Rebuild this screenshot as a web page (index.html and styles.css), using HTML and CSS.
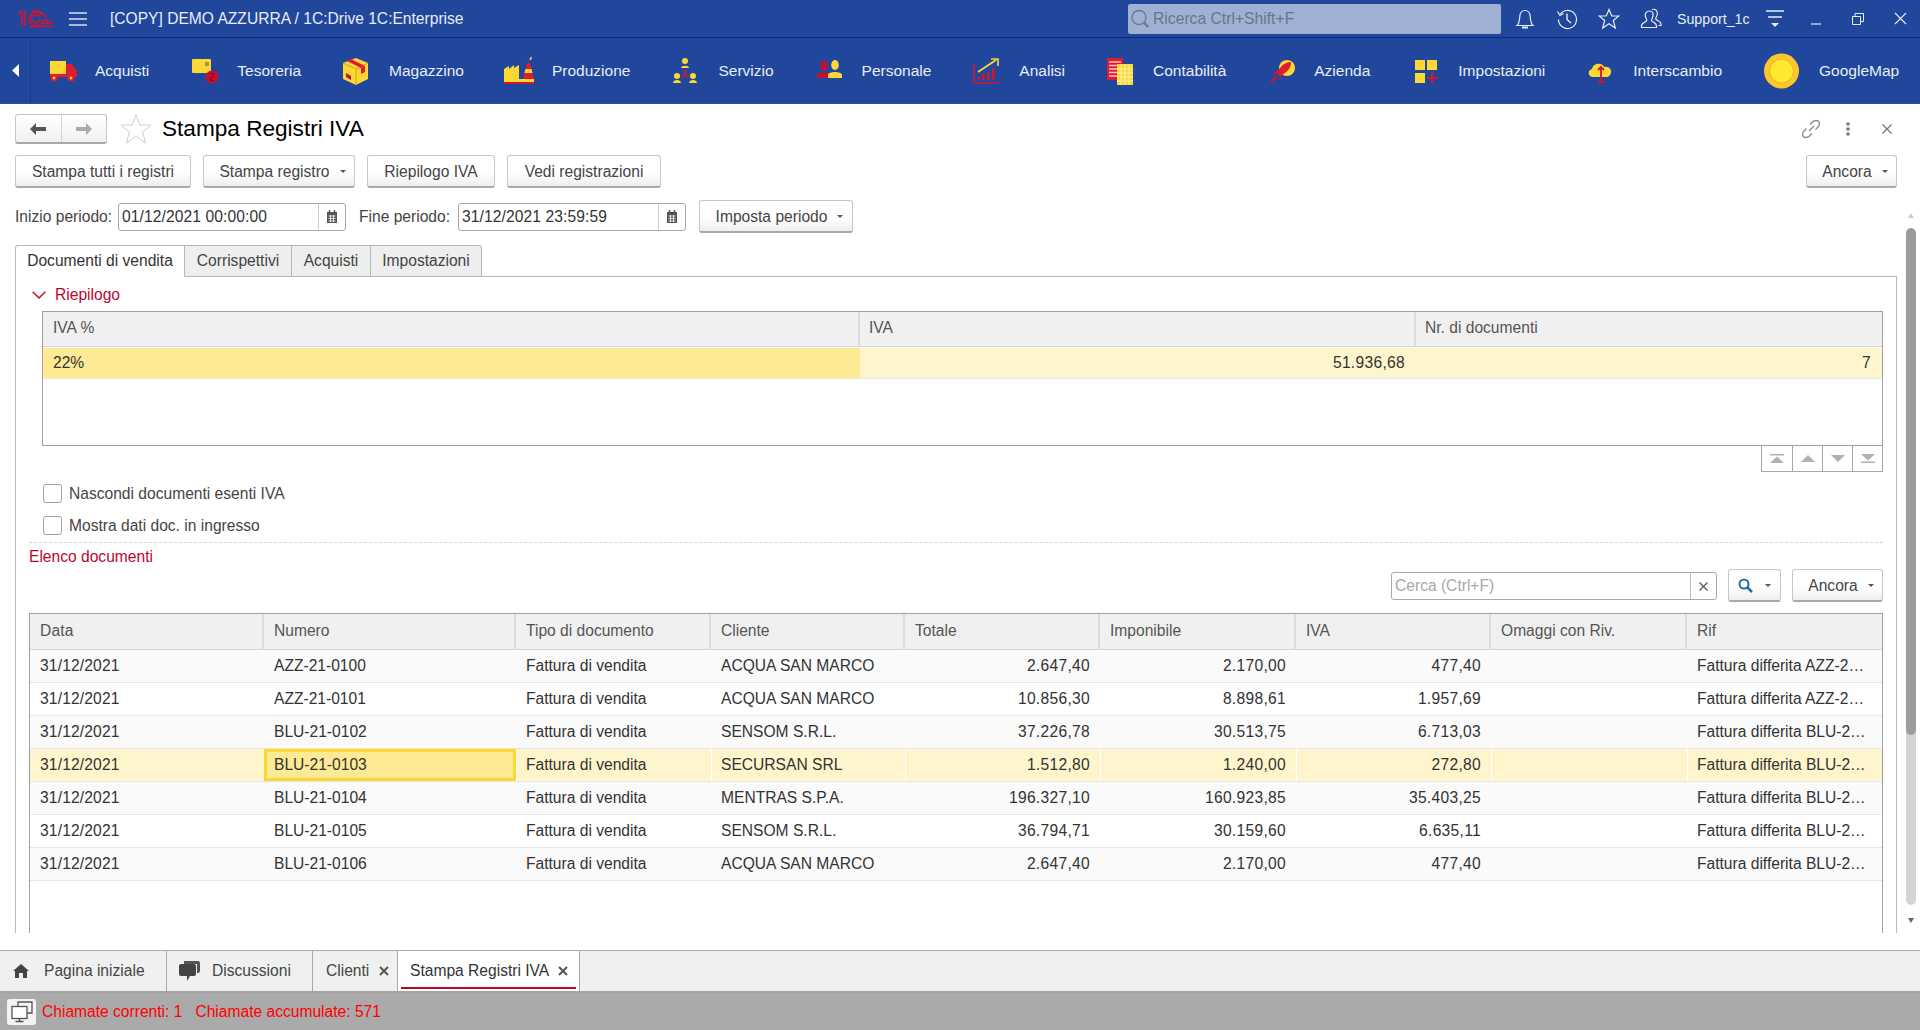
FILE: index.html
```html
<!DOCTYPE html>
<html lang="it">
<head>
<meta charset="utf-8">
<title>Stampa Registri IVA</title>
<link rel="stylesheet" href="styles.css">
</head>
<body>
<header class="topbar">
  <svg class="logo" viewBox="0 0 38 20" width="38" height="20"><g fill="none" stroke="#d8142c" stroke-width="1.6"><path d="M2 5 L6 2 V17"/><path d="M9 2 V17"/><path d="M26 6 A7 7 0 1 0 26 14 H37"/><path d="M23 8 A4 4 0 1 0 23 11.5 H34"/><path d="M13 17.5 H37"/><path d="M30 9.5 A13 9 0 0 0 16 1.5"/></g></svg>
  <svg class="burger" viewBox="0 0 18 14" width="18" height="14"><path d="M0 1H18M0 7H18M0 13H18" stroke="#d9deea" stroke-width="1.4"/></svg>
  <div class="app-title">[COPY] DEMO AZZURRA / 1C:Drive 1C:Enterprise</div>
  <div class="global-search">
    <svg viewBox="0 0 20 22" width="20" height="22"><circle cx="9" cy="9.5" r="7" fill="none" stroke="#6d7890" stroke-width="1.4"/><path d="M14 14.5L18 19" stroke="#6d7890" stroke-width="2.4"/></svg>
    <span>Ricerca Ctrl+Shift+F</span>
  </div>
  <div class="top-tools">
    <svg class="ti-bell" viewBox="0 0 20 22" width="20" height="22"><path d="M2 17.5C4.500 15 4.500 12 4.800 8.500 5 4.500 7 2.500 10 2.500S15 4.500 15.200 8.500C15.500 12 15.500 15 18 17.500Z" fill="none" stroke="#e8ecf5" stroke-width="1.2"/><path d="M7 19.500H13" stroke="#e8ecf5" stroke-width="2"/></svg>
    <svg class="ti-hist" viewBox="0 0 22 22" width="22" height="22"><path d="M4 6.500A9 9 0 1 1 2.500 11.500" fill="none" stroke="#e8ecf5" stroke-width="1.2"/><path d="M1.500 3.500L4 7.500 7.500 5.500" fill="none" stroke="#e8ecf5" stroke-width="1.200"/><path d="M11 5.500V11.500L15 15" fill="none" stroke="#e8ecf5" stroke-width="1.400"/></svg>
    <svg class="ti-star" viewBox="0 0 22 22" width="22" height="22"><path d="M11 1.500L13.800 8H20.800L15.300 12.500 17.300 20 11 15.800 4.700 20 6.700 12.500 1.200 8H8.200Z" fill="none" stroke="#e8ecf5" stroke-width="1.200"/></svg>
    <svg class="ti-user" viewBox="0 0 22 22" width="22" height="22"><path d="M9.500 3C12.500 3 13.500 5.500 13 8 12.700 10 11.500 11 11.500 12.500 11.500 14 16.500 14.500 16.500 18V19.500H1.500V18C1.500 14.500 6.800 14 6.800 12.500 6.800 11 5.800 10 5.300 8 4.800 5.500 6.500 3 9.500 3Z" fill="none" stroke="#e8ecf5" stroke-width="1.200"/><path d="M12 1.500C15.500 .5 18 3 17.200 6.500 16.900 8.500 15.500 9.500 15.800 11 16.200 12.500 21 13 21 16V17.500H18.500" fill="none" stroke="#e8ecf5" stroke-width="1.200"/></svg>
    <span class="user-name">Support_1c</span>
    <svg class="ti-menu" viewBox="0 0 18 20" width="18" height="20"><path d="M0 2H18M2 8H16" stroke="#e8ecf5" stroke-width="1.400"/><path d="M5 14H13L9 18Z" fill="#e8ecf5"/></svg>
    <svg class="ti-min" viewBox="0 0 12 14" width="12" height="14"><path d="M1 12H11" stroke="#e8ecf5" stroke-width="1.200"/></svg>
    <svg class="ti-rest" viewBox="0 0 12 12" width="12" height="12"><path d="M.5 3.500H8.500V11.500H.5ZM3 3.500V.5H11.500V8.500H8.500" fill="none" stroke="#e8ecf5"/></svg>
    <svg class="ti-close" viewBox="0 0 13 13" width="13" height="13"><path d="M1 1L12 12M12 1L1 12" stroke="#e8ecf5" stroke-width="1.100"/></svg>
  </div>
</header>

<nav class="sections">
  <div class="collapse"><svg viewBox="0 0 7 13" width="7" height="13"><path d="M7 0V13L0 6.500Z" fill="#fff"/></svg></div>
  <div class="sec"><svg class="sec-i" viewBox="0 0 30 30"><rect x="3" y="5" width="16" height="13" fill="#fdd835"/><path d="M19 8H25L30 15V20H19Z" fill="#e01b2f"/><path d="M3 18H30V21H3Z" fill="#e01b2f"/><circle cx="7" cy="22" r="3.500" fill="#e01b2f"/><circle cx="24" cy="22" r="3.500" fill="#e01b2f"/><circle cx="7" cy="22" r="1.400" fill="#fdd835"/><circle cx="24" cy="22" r="1.400" fill="#fdd835"/></svg><span>Acquisti</span></div>
  <div class="sec"><svg class="sec-i" viewBox="0 0 30 30"><rect x="3" y="3" width="19" height="14" rx="1" fill="#fdd835"/><rect x="16" y="6" width="4" height="4" fill="#a39a3a"/><circle cx="23" cy="21" r="6.500" fill="#c4102c"/><path d="M21 17.500H25L21 24.500H25" stroke="#8e0b22" stroke-width="1.200" fill="none"/></svg><span>Tesoreria</span></div>
  <div class="sec"><svg class="sec-i" viewBox="0 0 30 30"><path d="M15 2L27 7V23L15 29 2 23V7Z" fill="#fdd835"/><path d="M2 7L15 13 27 7M15 13V29" fill="none" stroke="#c9a227" stroke-width="1"/><path d="M6 5L10 3 24 10 20 12Z" fill="#e01b2f"/><path d="M20 12V18L24 16V10Z" fill="#e01b2f"/><path d="M5 17L10 20V24L5 21Z" fill="#c4102c"/></svg><span>Magazzino</span></div>
  <div class="sec"><svg class="sec-i" viewBox="0 0 30 30"><path d="M0 23V13L5 10V13L10 9V12L15 9V23Z" fill="#fdd835"/><path d="M19 23L23 7H26L30 23Z" fill="#e01b2f"/><path d="M21.500 13H27.500L28.500 17H20.500Z" fill="#fdd835"/><path d="M26 4L27.500 1" stroke="#fdd835" stroke-width="1.500"/><path d="M0 23H30V27H0Z" fill="#fdd835"/><path d="M0 26H30V28H0Z" fill="#d8142c"/></svg><span>Produzione</span></div>
  <div class="sec"><svg class="sec-i" viewBox="0 0 30 30"><g fill="#fdd835"><circle cx="15" cy="5" r="3"/><path d="M11 12C11 9 19 9 19 12Z"/><circle cx="7" cy="20" r="3"/><path d="M3 27C3 23 11 23 11 27Z"/><circle cx="23" cy="20" r="3"/><path d="M19 27C19 23 27 23 27 27Z"/></g><path d="M15 14V18L11 22M15 18L19 22" fill="none" stroke="#d8142c" stroke-width="1.500"/></svg><span>Servizio</span></div>
  <div class="sec"><svg class="sec-i" viewBox="0 0 30 30"><ellipse cx="10" cy="9.500" rx="3.500" ry="5" fill="#c4102c"/><path d="M3 22V19C3 15.500 14 15.500 15 18V22Z" fill="#c4102c"/><ellipse cx="21" cy="9" rx="3.800" ry="5" fill="#fdd835"/><path d="M14 22V19C14 15 28 15 28 19V22Z" fill="#fdd835"/></svg><span>Personale</span></div>
  <div class="sec"><svg class="sec-i" viewBox="0 0 30 30"><path d="M3 8V27H28" fill="none" stroke="#d8142c" stroke-width="1.600"/><path d="M7 24h2v-3h-2zM11 24h2.500v-6h-2.500zM16 24h2.500v-8h-2.500zM21 24h2.500v-12h-2.500z" fill="#d8142c"/><path d="M7 16L25 4" stroke="#fdd835" stroke-width="1.800"/><path d="M20 3H27V10" fill="none" stroke="#fdd835" stroke-width="1.600"/></svg><span>Analisi</span></div>
  <div class="sec"><svg class="sec-i" viewBox="0 0 30 30"><rect x="2" y="2" width="16" height="22" fill="#e01b2f"/><path d="M4 6H16M4 9.500H16M4 13H16M4 16.500H13M4 20H13" stroke="#f6c2c8" stroke-width="1.300"/><rect x="12" y="8" width="16" height="21" fill="#fdd835"/><path d="M16 8V29M20 8V29M24 8V29M12 13H28M12 17H28M12 21H28M12 25H28" stroke="#fff2a8" stroke-width="1"/></svg><span>Contabilità</span></div>
  <div class="sec"><svg class="sec-i" viewBox="0 0 30 30"><circle cx="21" cy="12" r="8" fill="#fdd835"/><path d="M25 6C18 6 14 11 11 17L14 20C20 17 25 13 25 6Z" fill="#e01b2f"/><path d="M8 16L14 14 10 20ZM12 24L16 18 14 24Z" fill="#d8142c"/><path d="M5 26L10 21" stroke="#d8142c" stroke-width="2"/></svg><span>Azienda</span></div>
  <div class="sec"><svg class="sec-i" viewBox="0 0 30 30"><g fill="#fdd835"><rect x="5" y="4" width="10" height="10"/><rect x="17" y="4" width="10" height="10"/><rect x="5" y="17" width="10" height="10"/></g><path d="M22 16V28M17 22H28" stroke="#d8142c" stroke-width="2"/></svg><span>Impostazioni</span></div>
  <div class="sec"><svg class="sec-i" viewBox="0 0 30 30"><path d="M8 21C3 21 2 14 7 13 8 7 17 6 19 11 25 10 28 15 25 19 24 20.500 23 21 21 21Z" fill="#fdd835"/><path d="M16 11V26M13 14L16 11 19 14M13 26H19" fill="none" stroke="#d8142c" stroke-width="1.800"/></svg><span>Interscambio</span></div>
  <div class="sec sec-map"><svg class="sec-i-map" viewBox="0 0 39 36"><circle cx="19.500" cy="18" r="17.500" fill="#fdc62a"/><circle cx="19.500" cy="18" r="12" fill="#ffe92e" stroke="#e9b528"/></svg><span>GoogleMap</span></div>
</nav>

<main class="form">
  <div class="content">
    <div class="form-head">
      <div class="nav-btns">
        <div class="nb"><svg viewBox="0 0 16 12" width="16" height="12"><path d="M0 6L6 0V4H16V8H6V12Z" fill="#555"/></svg></div>
        <div class="nb"><svg viewBox="0 0 16 12" width="16" height="12"><path d="M16 6L10 0V4H0V8H10V12Z" fill="#aaa"/></svg></div>
      </div>
      <svg class="fav" viewBox="0 0 32 30" width="32" height="30"><path d="M16 1L20 11H31L22.500 18 25.500 29 16 22.500 6.500 29 9.500 18 1 11H12Z" fill="#fff" stroke="#c9cdd3"/></svg>
      <h1>Stampa Registri IVA</h1>
      <div class="head-tools">
        <svg viewBox="0 0 20 20" width="20" height="20"><path d="M8 12L13 7M9 5.500L11.500 3C13.500 1 17 1 18 3S18.500 6.500 17 8L14.500 10.500M11 14.500L8.500 17C6.500 19 3 19 2 17S1.500 13.500 3 12L5.500 9.500" fill="none" stroke="#888" stroke-width="1.300"/></svg>
        <svg class="ht-dots" viewBox="0 0 6 14" width="6" height="14"><g fill="#777"><circle cx="3" cy="2" r="1.800"/><circle cx="3" cy="7" r="1.800"/><circle cx="3" cy="12" r="1.800"/></g></svg>
        <svg class="ht-x" viewBox="0 0 10 10" width="10" height="10"><path d="M.5 .5L9.500 9.500M9.500 .5L.5 9.500" stroke="#777" stroke-width="1.300"/></svg>
      </div>
    </div>

    <div class="cmd-row">
      <button class="btn b-all">Stampa tutti i registri</button>
      <button class="btn b-reg">Stampa registro<i class="caret"></i></button>
      <button class="btn b-riep">Riepilogo IVA</button>
      <button class="btn b-vedi">Vedi registrazioni</button>
      <button class="btn b-more">Ancora<i class="caret"></i></button>
    </div>

    <div class="period-row">
      <label class="lbl">Inizio periodo:</label>
      <div class="date-f"><span>01/12/2021 00:00:00</span><b class="cal"><svg viewBox="0 0 12 14" width="12" height="14"><path d="M1 2H11V13H1Z" fill="#555"/><path d="M3.500 0V3M8.500 0V3" stroke="#555" stroke-width="1.500"/><path d="M2.500 6H9.500M2.500 8.500H9.500M2.500 11H9.500M4.500 5V12M7.500 5V12" stroke="#fff" stroke-width=".8"/></svg></b></div>
      <label class="lbl lbl2">Fine periodo:</label>
      <div class="date-f"><span>31/12/2021 23:59:59</span><b class="cal"><svg viewBox="0 0 12 14" width="12" height="14"><path d="M1 2H11V13H1Z" fill="#555"/><path d="M3.500 0V3M8.500 0V3" stroke="#555" stroke-width="1.500"/><path d="M2.500 6H9.500M2.500 8.500H9.500M2.500 11H9.500M4.500 5V12M7.500 5V12" stroke="#fff" stroke-width=".8"/></svg></b></div>
      <button class="btn b-per">Imposta periodo<i class="caret"></i></button>
    </div>

    <div class="tabs">
      <div class="tab tab-on t1">Documenti di vendita</div>
      <div class="tab t2">Corrispettivi</div>
      <div class="tab t3">Acquisti</div>
      <div class="tab t4">Impostazioni</div>
    </div>

    <section class="pane">
      <div class="group-title"><svg viewBox="0 0 14 8" width="14" height="8"><path d="M.7 .7L7 7 13.300 .7" fill="none" stroke="#c4102c" stroke-width="1.500"/></svg><span>Riepilogo</span></div>
      <div class="sum">
        <div class="sum-row sum-head"><div class="hc">IVA %</div><div class="hc">IVA</div><div class="hc">Nr. di documenti</div></div>
        <div class="sum-row sum-sel"><div class="cur-s">22%</div><div class="num">51.936,68</div><div class="num">7</div></div>
      </div>
      <div class="pager">
        <div class="pg"><svg viewBox="0 0 14 9" width="14" height="9"><path d="M0 0H14V1.500H0ZM7 2.500L14 9H0Z" fill="#b0b0b0"/></svg></div>
        <div class="pg"><svg viewBox="0 0 14 7" width="14" height="7"><path d="M7 0L14 7H0Z" fill="#b0b0b0"/></svg></div>
        <div class="pg"><svg viewBox="0 0 14 7" width="14" height="7"><path d="M7 7L14 0H0Z" fill="#b0b0b0"/></svg></div>
        <div class="pg"><svg viewBox="0 0 14 9" width="14" height="9"><path d="M0 7.500H14V9H0ZM7 6.500L14 0H0Z" fill="#b0b0b0"/></svg></div>
      </div>
      <div class="check c1"><i></i><span>Nascondi documenti esenti IVA</span></div>
      <div class="check c2"><i></i><span>Mostra dati doc. in ingresso</span></div>
      <div class="dash"></div>
      <div class="list-title">Elenco documenti</div>
      <div class="list-tools">
        <div class="search"><span>Cerca (Ctrl+F)</span><b><svg viewBox="0 0 9 9" width="9" height="9"><path d="M.5 .5L8.500 8.500M8.500 .5L.5 8.500" stroke="#555" stroke-width="1.200"/></svg></b></div>
        <button class="btn b-find"><svg viewBox="0 0 15 15" width="15" height="15"><circle cx="6" cy="6" r="4.500" fill="none" stroke="#1f6fa8" stroke-width="2"/><path d="M9.500 9.500L14 14" stroke="#1f6fa8" stroke-width="2.500"/></svg><i class="caret"></i></button>
        <button class="btn b-more2">Ancora<i class="caret"></i></button>
      </div>
      <div class="docs">
        <div class="doc-row doc-head"><div class="hc">Data</div><div class="hc">Numero</div><div class="hc">Tipo di documento</div><div class="hc">Cliente</div><div class="hc">Totale</div><div class="hc">Imponibile</div><div class="hc">IVA</div><div class="hc">Omaggi con Riv.</div><div class="hc">Rif</div></div>
        <div class="doc-row alt"><div>31/12/2021</div><div>AZZ-21-0100</div><div>Fattura di vendita</div><div>ACQUA SAN MARCO</div><div class="num">2.647,40</div><div class="num">2.170,00</div><div class="num">477,40</div><div></div><div>Fattura differita AZZ-2…</div></div>
        <div class="doc-row"><div>31/12/2021</div><div>AZZ-21-0101</div><div>Fattura di vendita</div><div>ACQUA SAN MARCO</div><div class="num">10.856,30</div><div class="num">8.898,61</div><div class="num">1.957,69</div><div></div><div>Fattura differita AZZ-2…</div></div>
        <div class="doc-row alt"><div>31/12/2021</div><div>BLU-21-0102</div><div>Fattura di vendita</div><div>SENSOM S.R.L.</div><div class="num">37.226,78</div><div class="num">30.513,75</div><div class="num">6.713,03</div><div></div><div>Fattura differita BLU-2…</div></div>
        <div class="doc-row sel"><div>31/12/2021</div><div class="cur">BLU-21-0103</div><div>Fattura di vendita</div><div>SECURSAN SRL</div><div class="num">1.512,80</div><div class="num">1.240,00</div><div class="num">272,80</div><div></div><div>Fattura differita BLU-2…</div></div>
        <div class="doc-row alt"><div>31/12/2021</div><div>BLU-21-0104</div><div>Fattura di vendita</div><div>MENTRAS S.P.A.</div><div class="num">196.327,10</div><div class="num">160.923,85</div><div class="num">35.403,25</div><div></div><div>Fattura differita BLU-2…</div></div>
        <div class="doc-row"><div>31/12/2021</div><div>BLU-21-0105</div><div>Fattura di vendita</div><div>SENSOM S.R.L.</div><div class="num">36.794,71</div><div class="num">30.159,60</div><div class="num">6.635,11</div><div></div><div>Fattura differita BLU-2…</div></div>
        <div class="doc-row alt"><div>31/12/2021</div><div>BLU-21-0106</div><div>Fattura di vendita</div><div>ACQUA SAN MARCO</div><div class="num">2.647,40</div><div class="num">2.170,00</div><div class="num">477,40</div><div></div><div>Fattura differita BLU-2…</div></div>
      </div>
    </section>
  </div>
  <aside class="vscroll">
    <svg class="arr" viewBox="0 0 6 5" width="6" height="5"><path d="M3 0L6 5H0Z" fill="#ccc"/></svg>
    <div class="track"><div class="thumb"></div></div>
    <svg class="arr arr-d" viewBox="0 0 6 5" width="6" height="5"><path d="M3 5L6 0H0Z" fill="#666"/></svg>
  </aside>
</main>

<div class="open-tabs">
  <div class="ot ot1"><svg viewBox="0 0 16 14" width="16" height="14"><path d="M8 0L16 7H14V14H10V9H6V14H2V7H0Z" fill="#444"/></svg><span>Pagina iniziale</span></div>
  <div class="ot ot2"><svg viewBox="0 0 21 20" width="21" height="20"><path d="M5 0H19Q21 0 21 2V10Q21 12 19 12H18V3H5Z" fill="#555"/><path d="M2 3H15Q17 3 17 5V13Q17 15 15 15H11L8 20V15H2Q0 15 0 13V5Q0 3 2 3Z" fill="#444"/></svg><span>Discussioni</span></div>
  <div class="ot ot3"><span>Clienti</span><svg viewBox="0 0 10 10" width="10" height="10"><path d="M1 1L9 9M9 1L1 9" stroke="#555" stroke-width="2"/></svg></div>
  <div class="ot ot4"><span>Stampa Registri IVA</span><svg viewBox="0 0 10 10" width="10" height="10"><path d="M1 1L9 9M9 1L1 9" stroke="#555" stroke-width="2"/></svg></div>
</div>

<footer class="status">
  <div class="st-ico"><svg viewBox="0 0 24 24" width="24" height="24"><path d="M8 6V2H22V13H17" fill="none" stroke="#555" stroke-width="1.300"/><rect x="2" y="6.500" width="15" height="12" fill="#fff" stroke="#555" stroke-width="1.300"/><path d="M9.500 18.500V21M5.500 21.500H13.500" stroke="#555" stroke-width="1.500"/></svg></div>
  <span class="st-a">Chiamate correnti: 1</span>
  <span class="st-b">Chiamate accumulate: 571</span>
</footer>
</body>
</html>
```
FILE: styles.css
```css
* { box-sizing: border-box; }
html, body { margin: 0; height: 100%; }
body {
  width: 1920px; height: 1030px; overflow: hidden;
  display: flex; flex-direction: column;
  font-family: "Liberation Sans", Arial, sans-serif;
  font-size: 15.6px; color: #333; background: #fff;
}
svg { display: block; flex: none; }

/* top bar */
.topbar {
  height: 38px; flex: none; background: #20479c;
  border-bottom: 1px solid #0c2a7d;
  display: flex; align-items: center; color: #e8ecf5;
}
.logo { margin-left: 16px; }
.burger { margin-left: 15px; }
.app-title { margin-left: 23px; font-size: 15.6px; width: 1018px; white-space: nowrap; }
.global-search {
  width: 373px; height: 30px; background: #a0b0d4; border-radius: 2px;
  display: flex; align-items: center; padding-left: 2px; color: #6a7488; font-size: 15.7px;
}
.global-search span { margin-left: 3px; }
.top-tools { display: flex; align-items: center; flex: 1; position: relative; height: 30px; }
.ti-bell { margin-left: 14px; }
.ti-hist { margin-left: 21px; }
.ti-star { margin-left: 20px; }
.ti-user { margin-left: 20px; }
.user-name { margin-left: 15px; font-size: 14.2px; width: 73px; white-space: nowrap; }
.ti-menu { margin-left: 16px; }
.ti-min { margin-left: 26px; }
.ti-rest { margin-left: 30px; }
.ti-close { margin-left: 30px; }

/* section panel */
.sections {
  height: 66px; flex: none; background: #20479c;
  display: flex; align-items: center; color: #e8ecf5;
  border-bottom: 1px solid #2a4f9e;
}
.collapse {
  width: 31px; height: 66px; display: flex; align-items: center;
  padding-left: 12px; border-right: 1px solid #173a8c;
}
.sec { display: flex; align-items: center; gap: 18px; margin-left: 40px; white-space: nowrap; font-size: 15.5px; }
.collapse + .sec { margin-left: 16px; }
.sec-i { width: 30px; height: 30px; }
.sec-i-map { width: 39px; height: 36px; }
.sec-map { margin-left: 40px; }

/* form */
.form { height: 846px; flex: none; display: flex; }
.content { width: 1897px; padding: 10px 0 17px 15px; display: flex; flex-direction: column; }

.form-head { height: 30px; display: flex; align-items: center; flex: none; }
.nav-btns {
  width: 92px; height: 30px; display: flex; border: 1px solid #c6c6c6; border-bottom: 2px solid #a8a8a8;
  border-radius: 3px; background: linear-gradient(#fff, #f0f0f0);
}
.nb { flex: 1; display: flex; align-items: center; justify-content: center; }
.nb + .nb { border-left: 1px solid #d4d4d4; }
.fav { margin-left: 13px; }
h1 { margin: 0 0 0 10px; font-size: 22.6px; font-weight: 400; color: #000; flex: 1; }
.head-tools { display: flex; align-items: center; width: 96px; }
.ht-dots { margin-left: 24px; }
.ht-x { margin-left: 31px; }

.cmd-row, .list-tools { display: flex; }
.btn {
  height: 33px; border: 1px solid #c6c6c6; border-bottom: 2px solid #a8a8a8; border-radius: 3px;
  background: linear-gradient(#fff 55%, #eee);
  font: inherit; color: #444; padding: 1px 0 0; display: flex; align-items: center; justify-content: center; flex: none;
}
.caret { width: 0; height: 0; margin-left: 10px; border: 3px solid transparent; border-top-color: #555; border-bottom: 0; }
.b-reg, .b-more, .b-per, .b-more2 { padding-left: 7px; }
.cmd-row { margin-top: 11px; gap: 12px; flex: none; }
.b-all { width: 176px; }
.b-reg { width: 152px; }
.b-riep { width: 128px; }
.b-vedi { width: 154px; }
.b-more { width: 91px; margin-left: auto; }

.period-row { margin-top: 12px; height: 33px; display: flex; align-items: center; flex: none; color: #444; }
.lbl { width: 103px; white-space: nowrap; padding-top: 1px; }
.lbl2 { width: 99px; margin-left: 13px; }
.date-f {
  width: 228px; height: 28px; border: 1px solid #a9a9a9; border-radius: 3px;
  display: flex; align-items: center; color: #333;
}
.date-f span { flex: 1; padding: 1px 0 0 3px; letter-spacing: .1px; }
.cal { width: 27px; height: 100%; border-left: 1px solid #ccc; display: flex; align-items: center; justify-content: center; }
.b-per { width: 154px; margin-left: 13px; }

.tabs { margin-top: 12px; height: 32px; display: flex; flex: none; position: relative; z-index: 1; }
.tab {
  height: 32px; border: 1px solid #b8b8b8; border-left: 0; background: #eee;
  display: flex; align-items: center; justify-content: center; color: #444; white-space: nowrap;
}
.tab-on { background: #fff; border-left: 1px solid #b8b8b8; border-bottom-color: #fff; border-radius: 3px 0 0 0; color: #333; }
.t1 { width: 170px; }
.t2 { width: 107px; }
.t3 { width: 79px; }
.t4 { width: 111px; border-radius: 0 3px 0 0; }

.pane {
  flex: 1; min-height: 0; margin-top: -1px;
  border: 1px solid #b8b8b8; border-bottom: 0;
  padding: 0 13px 0 13px; display: flex; flex-direction: column;
}
.group-title { height: 34px; display: flex; align-items: center; color: #b9062f; padding: 2px 0 0 3px; flex: none; }
.group-title span { margin-left: 9px; }
.sum { height: 135px; margin-left: 13px; border: 1px solid #a0a0a0; flex: none; }
.sum-row { display: grid; grid-template-columns: 817px 556px 1fr; }
.sum-head { height: 35px; }
.sum-head .hc + .hc { padding-left: 9px; }
.hc {
  background: #f0f0f0; color: #555; display: flex; align-items: center; padding: 0 0 2px 10px;
  border-right: 2px solid #dcdcdc; border-bottom: 1px solid #d4d4d4; white-space: nowrap; height: 100%;
}
.hc:last-child { border-right: 0; }
.sum-sel { height: 31px; margin-top: 1px; background: #fff5cc; border-bottom: 1px solid #e6e6e6; }
.cur-s { background: #fee994; display: flex; align-items: center; padding-left: 10px; }
.num { display: flex; align-items: center; justify-content: flex-end; padding-right: 11px; letter-spacing: .3px; }

.pager { display: flex; align-self: flex-end; height: 26px; flex: none; border: 1px solid #a8a8a8; border-top: 0; }
.pg { width: 30px; display: flex; align-items: center; justify-content: center; }
.pg + .pg { border-left: 1px solid #a8a8a8; }

.check { display: flex; align-items: center; margin-left: 14px; height: 19px; color: #444; flex: none; }
.check i { width: 19px; height: 19px; border: 1px solid #a0a0a0; border-radius: 3px; background: #fff; }
.check span { margin-left: 7px; }
.c1 { margin-top: 12px; }
.c2 { margin-top: 13px; }
.dash { margin-top: 7px; height: 0; border-top: 1px dashed #d6d6d6; flex: none; }
.list-title { margin-top: 6px; height: 16px; line-height: 16px; color: #b9062f; flex: none; }
.list-tools { margin-top: 4px; height: 33px; justify-content: flex-end; align-items: flex-start; flex: none; }
.search {
  width: 326px; height: 28px; margin-top: 3px; border: 1px solid #a9a9a9; border-radius: 3px;
  display: flex; align-items: center; color: #a8a8a8;
}
.search span { flex: 1; padding-left: 3px; }
.search b { width: 26px; height: 100%; border-left: 1px solid #bbb; display: flex; align-items: center; justify-content: center; }
.b-find { width: 53px; margin-left: 11px; }
.b-find .caret { margin-left: 12px; }
.b-more2 { width: 91px; margin-left: 11px; }

.docs { margin-top: 11px; flex: 1; min-height: 0; border: 1px solid #a0a0a0; border-bottom: 0; }
.doc-row {
  display: grid; grid-template-columns: 234px 252px 195px 194px 195px 196px 195px 196px 1fr;
  height: 33px; border-bottom: 1px solid #e6e6e6; background: #fff;
}
.doc-row > div { display: flex; align-items: center; padding-left: 10px; white-space: nowrap; overflow: hidden; }
.doc-row > div:first-child { letter-spacing: .15px; }
.doc-row > .num { justify-content: flex-end; padding: 0 10px 0 0; }
.doc-head { height: 36px; border-bottom: 0; }
.alt { background: #fafafa; }
.sel { background: #fff5cc; }
.sel > div + div { box-shadow: inset 1px 0 #fff; }
.sel > .cur { background: #fee994; box-shadow: inset 0 0 0 3px #fdd835; }

/* page scrollbar */
.vscroll { width: 23px; padding: 109px 4px 27px 9px; display: flex; flex-direction: column; align-items: center; gap: 10px; }
.track { flex: 1; width: 10px; background: #d4d4d4; border-radius: 5px; overflow: hidden; }
.thumb { height: 507px; background: #9c9c9c; border-radius: 5px; }
.arr-d { margin-top: 3px; }

/* open windows bar */
.open-tabs {
  height: 41px; flex: none; display: flex; background: #f0f0f0;
  border-top: 1px solid #aaa; color: #444;
}
.ot { height: 100%; display: flex; align-items: center; border-right: 1px solid #aaa; white-space: nowrap; }
.ot1 { width: 167px; padding-left: 13px; gap: 15px; }
.ot2 { width: 146px; padding-left: 12px; gap: 12px; }
.ot3 { width: 85px; padding-left: 13px; gap: 10px; }
.ot4 { width: 182px; padding-left: 12px; gap: 9px; background: #fff; position: relative; color: #333; }
.ot4::after { content: ""; position: absolute; left: 3px; right: 3px; bottom: 2px; height: 2px; background: #b9062f; }

.status {
  height: 40px; flex: none; background: #aaa; border-top: 2px solid #a4a4a4;
  display: flex; align-items: center; color: #f00; padding-left: 7px;
}
.st-ico {
  width: 29px; height: 26px; background: #f4f4f4; border-radius: 3px;
  display: flex; align-items: center; justify-content: center;
}
.st-a { margin-left: 6px; }
.st-b { margin-left: 13px; }
```
